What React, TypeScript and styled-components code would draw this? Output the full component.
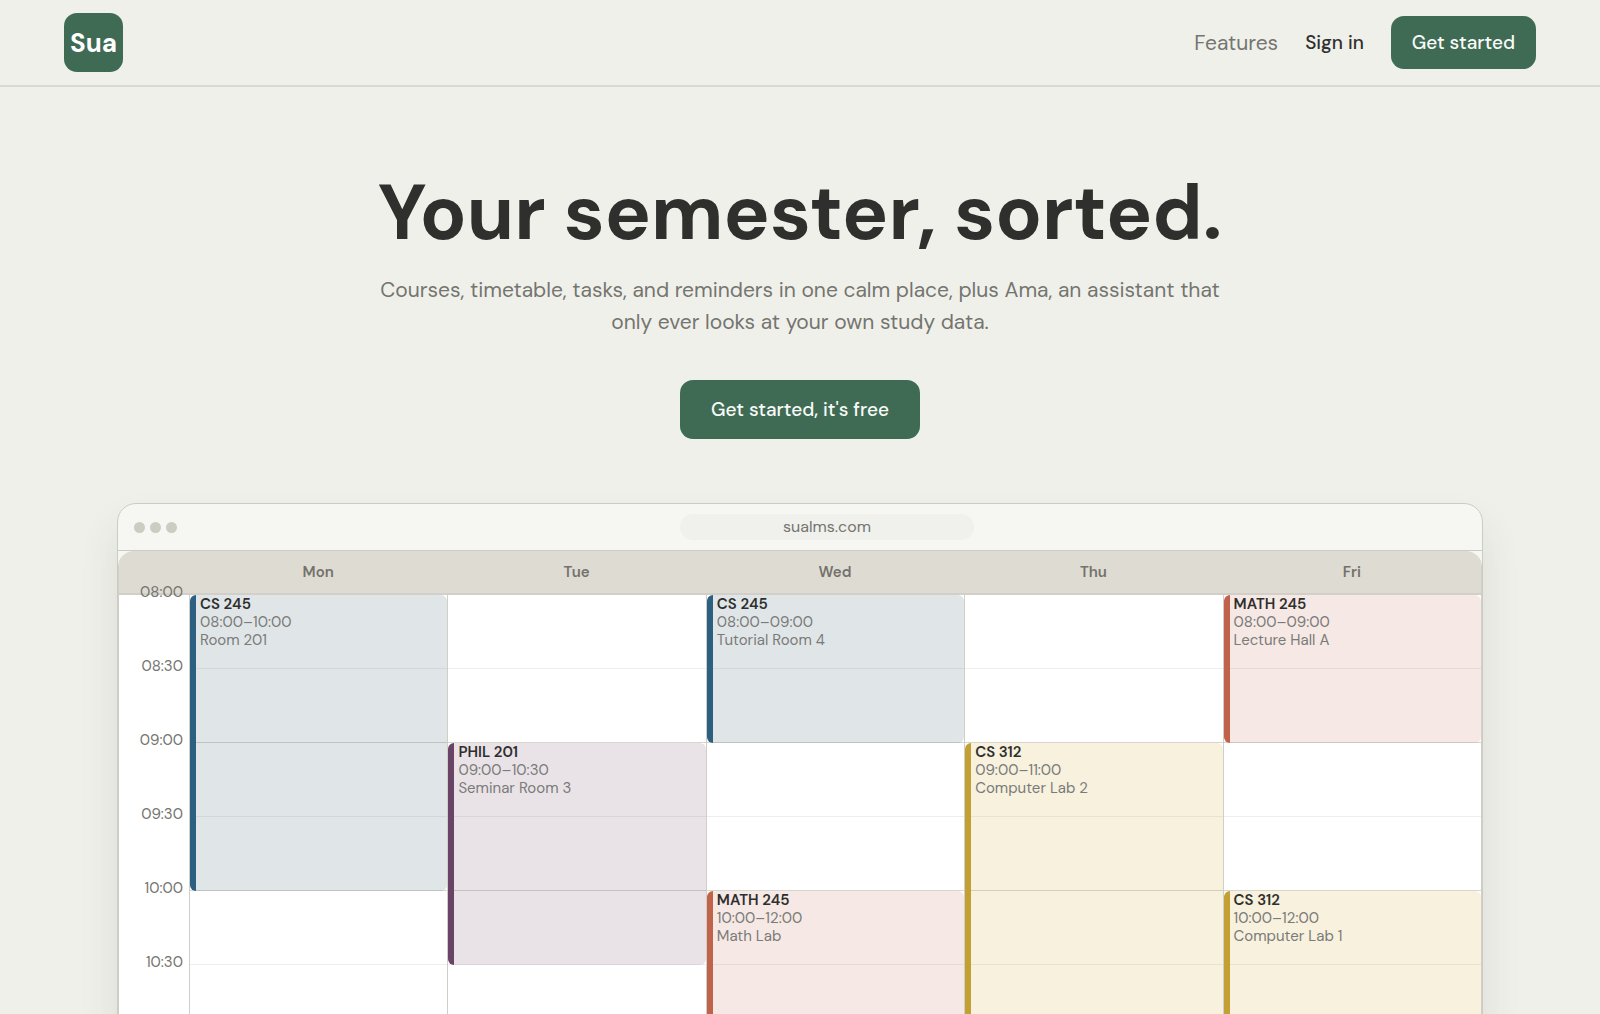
import React from "react";
import styled, { createGlobalStyle } from "styled-components";

const GlobalStyle = createGlobalStyle`
  *, *::before, *::after { box-sizing: border-box; }
  body {
    margin: 0;
    background: #f0f0eb;
    color: #2f2f2d;
    font-family: "DM Sans", Inter, "Liberation Sans", sans-serif;
  }
  h1, p { margin: 0; }
`;

const Page = styled.div`
  height: 100vh;
  overflow: hidden;
`;

const Header = styled.header`
  display: flex;
  align-items: center;
  justify-content: space-between;
  padding: 13px 64px;
  border-bottom: 2px solid #d9dad3;
`;

const Logo = styled.a`
  display: grid;
  place-items: center;
  width: 59px;
  height: 59px;
  border-radius: 13px;
  background: #3f6b55;
  color: #fff;
  font-size: 26px;
  font-weight: 700;
  text-decoration: none;
`;

const Nav = styled.nav`
  display: flex;
  align-items: center;
  gap: 27px;
`;

const NavLink = styled.a<{ $strong?: boolean }>`
  color: ${(p) => (p.$strong ? "#2f2f2d" : "#74756f")};
  font-size: ${(p) => (p.$strong ? 19 : 21)}px;
  font-weight: ${(p) => (p.$strong ? 500 : 400)};
  line-height: 24px;
  text-decoration: none;
`;

const Button = styled.button<{ $large?: boolean }>`
  height: ${(p) => (p.$large ? 59 : 53)}px;
  padding: 0 ${(p) => (p.$large ? 31 : 21)}px;
  border: 0;
  border-radius: 13px;
  background: #3f6b55;
  color: #f8faf7;
  font: inherit;
  font-size: 19px;
  font-weight: 500;
  white-space: nowrap;
  cursor: pointer;
`;

const Hero = styled.main`
  display: flex;
  flex-direction: column;
  align-items: center;
  padding: 84px 64px 0;
`;

const Title = styled.h1`
  font-size: 77px;
  font-weight: 700;
  line-height: 84px;
  text-align: center;
`;

const Lead = styled.p`
  max-width: 872px;
  margin-top: 19px;
  color: #74756f;
  font-size: 21px;
  line-height: 32px;
  text-align: center;
`;

const Action = styled.div`
  margin: 42px 0 64px;
`;

const Browser = styled.section`
  width: 100%;
  max-width: 1366px;
  border: 1px solid #cbccc5;
  border-radius: 19px 19px 0 0;
  background: #f6f7f3;
  box-shadow: 0 24px 40px rgba(60, 60, 50, 0.1);
`;

const Chrome = styled.div`
  display: flex;
  align-items: center;
  gap: 11px;
  height: 47px;
  padding: 0 16px;
  border-bottom: 1px solid #cbccc5;
`;

const Dots = styled.div`
  display: flex;
  gap: 5px;
`;

const Dot = styled.span`
  width: 11px;
  height: 11px;
  border-radius: 50%;
  background: #cdccc2;
`;

const Address = styled.div`
  flex: 1;
  max-width: 294px;
  margin: 0 auto;
  border-radius: 13px;
  background: #f0f0ec;
  color: #74756f;
  font-size: 16px;
  line-height: 26px;
  text-align: center;
`;

const Timetable = styled.div`
  overflow: hidden;
  border: 1px solid #d0cfc7;
  border-top: 0;
  border-radius: 16px 16px 0 0;
  background: #fff;
`;

const columns = "70px repeat(5, minmax(0, 1fr))";

const DayRow = styled.div`
  display: grid;
  grid-template-columns: ${columns};
  align-items: center;
  height: 44px;
  border-bottom: 2px solid #d1cfc7;
  background: #dedbd3;
`;

const DayName = styled.div`
  color: #74726b;
  font-size: 15px;
  font-weight: 600;
  text-align: center;
`;

const Week = styled.div`
  display: grid;
  grid-template-columns: ${columns};
`;

const slotRows = "repeat(6, 74px)";

const Times = styled.div`
  position: relative;
  display: grid;
  grid-template-rows: ${slotRows};
  margin-top: -13px;
  padding-right: 6px;
  color: #74756f;
  font-size: 15px;
  line-height: 20px;
  text-align: right;
`;

const Day = styled.div`
  display: grid;
  grid-template-columns: minmax(0, 1fr);
  grid-template-rows: ${slotRows};
  border-left: 1px solid #d0cfc7;
`;

const Slot = styled.div<{ $row: number }>`
  grid-row: ${(p) => p.$row};
  grid-column: 1;
  border-bottom: 1px solid ${(p) => (p.$row % 2 ? "#eeefec" : "#d6d6cf")};
`;

const tones = {
  blue: ["#2c5f80", "rgba(48, 88, 104, 0.15)"],
  purple: ["#6a4466", "rgba(106, 68, 102, 0.15)"],
  red: ["#c0634a", "rgba(192, 99, 74, 0.15)"],
  yellow: ["#c2a033", "rgba(198, 158, 32, 0.15)"],
};

type Tone = keyof typeof tones;

const Event = styled.article<{ $tone: Tone; $start: number; $span: number }>`
  grid-row: ${(p) => p.$start} / span ${(p) => p.$span};
  grid-column: 1;
  z-index: 1;
  padding-left: 4px;
  border-left: 6px solid ${(p) => tones[p.$tone][0]};
  border-radius: 6px;
  background: ${(p) => tones[p.$tone][1]};
  background-clip: padding-box;
  color: #7a7b79;
  font-size: 15px;
  line-height: 18px;
`;

const Course = styled.strong`
  display: block;
  color: #2f2f2d;
  font-weight: 600;
`;

const Line = styled.span`
  display: block;
`;

interface Session {
  course: string;
  time: string;
  room: string;
  tone: Tone;
  start: number;
  span: number;
}

const times = ["08:00", "08:30", "09:00", "09:30", "10:00", "10:30"];

const week: { day: string; sessions: Session[] }[] = [
  {
    day: "Mon",
    sessions: [{ course: "CS 245", time: "08:00–10:00", room: "Room 201", tone: "blue", start: 1, span: 4 }],
  },
  {
    day: "Tue",
    sessions: [{ course: "PHIL 201", time: "09:00–10:30", room: "Seminar Room 3", tone: "purple", start: 3, span: 3 }],
  },
  {
    day: "Wed",
    sessions: [
      { course: "CS 245", time: "08:00–09:00", room: "Tutorial Room 4", tone: "blue", start: 1, span: 2 },
      { course: "MATH 245", time: "10:00–12:00", room: "Math Lab", tone: "red", start: 5, span: 2 },
    ],
  },
  {
    day: "Thu",
    sessions: [{ course: "CS 312", time: "09:00–11:00", room: "Computer Lab 2", tone: "yellow", start: 3, span: 4 }],
  },
  {
    day: "Fri",
    sessions: [
      { course: "MATH 245", time: "08:00–09:00", room: "Lecture Hall A", tone: "red", start: 1, span: 2 },
      { course: "CS 312", time: "10:00–12:00", room: "Computer Lab 1", tone: "yellow", start: 5, span: 2 },
    ],
  },
];

export default function App() {
  return (
    <Page>
      <GlobalStyle />
      <Header>
        <Logo href="#">Sua</Logo>
        <Nav>
          <NavLink href="#features">Features</NavLink>
          <NavLink href="#signin" $strong>
            Sign in
          </NavLink>
          <Button type="button">Get started</Button>
        </Nav>
      </Header>
      <Hero>
        <Title>Your semester, sorted.</Title>
        <Lead>
          Courses, timetable, tasks, and reminders in one calm place, plus Ama, an assistant that only ever looks at
          your own study data.
        </Lead>
        <Action>
          <Button type="button" $large>
            Get started, it's free
          </Button>
        </Action>
        <Browser>
          <Chrome>
            <Dots>
              <Dot />
              <Dot />
              <Dot />
            </Dots>
            <Address>sualms.com</Address>
          </Chrome>
          <Timetable>
            <DayRow>
              <span />
              {week.map(({ day }) => (
                <DayName key={day}>{day}</DayName>
              ))}
            </DayRow>
            <Week>
              <Times>
                {times.map((time) => (
                  <span key={time}>{time}</span>
                ))}
              </Times>
              {week.map(({ day, sessions }) => (
                <Day key={day}>
                  {times.map((time, i) => (
                    <Slot key={time} $row={i + 1} />
                  ))}
                  {sessions.map((s) => (
                    <Event key={s.course + s.time} $tone={s.tone} $start={s.start} $span={s.span}>
                      <Course>{s.course}</Course>
                      <Line>{s.time}</Line>
                      <Line>{s.room}</Line>
                    </Event>
                  ))}
                </Day>
              ))}
            </Week>
          </Timetable>
        </Browser>
      </Hero>
    </Page>
  );
}
